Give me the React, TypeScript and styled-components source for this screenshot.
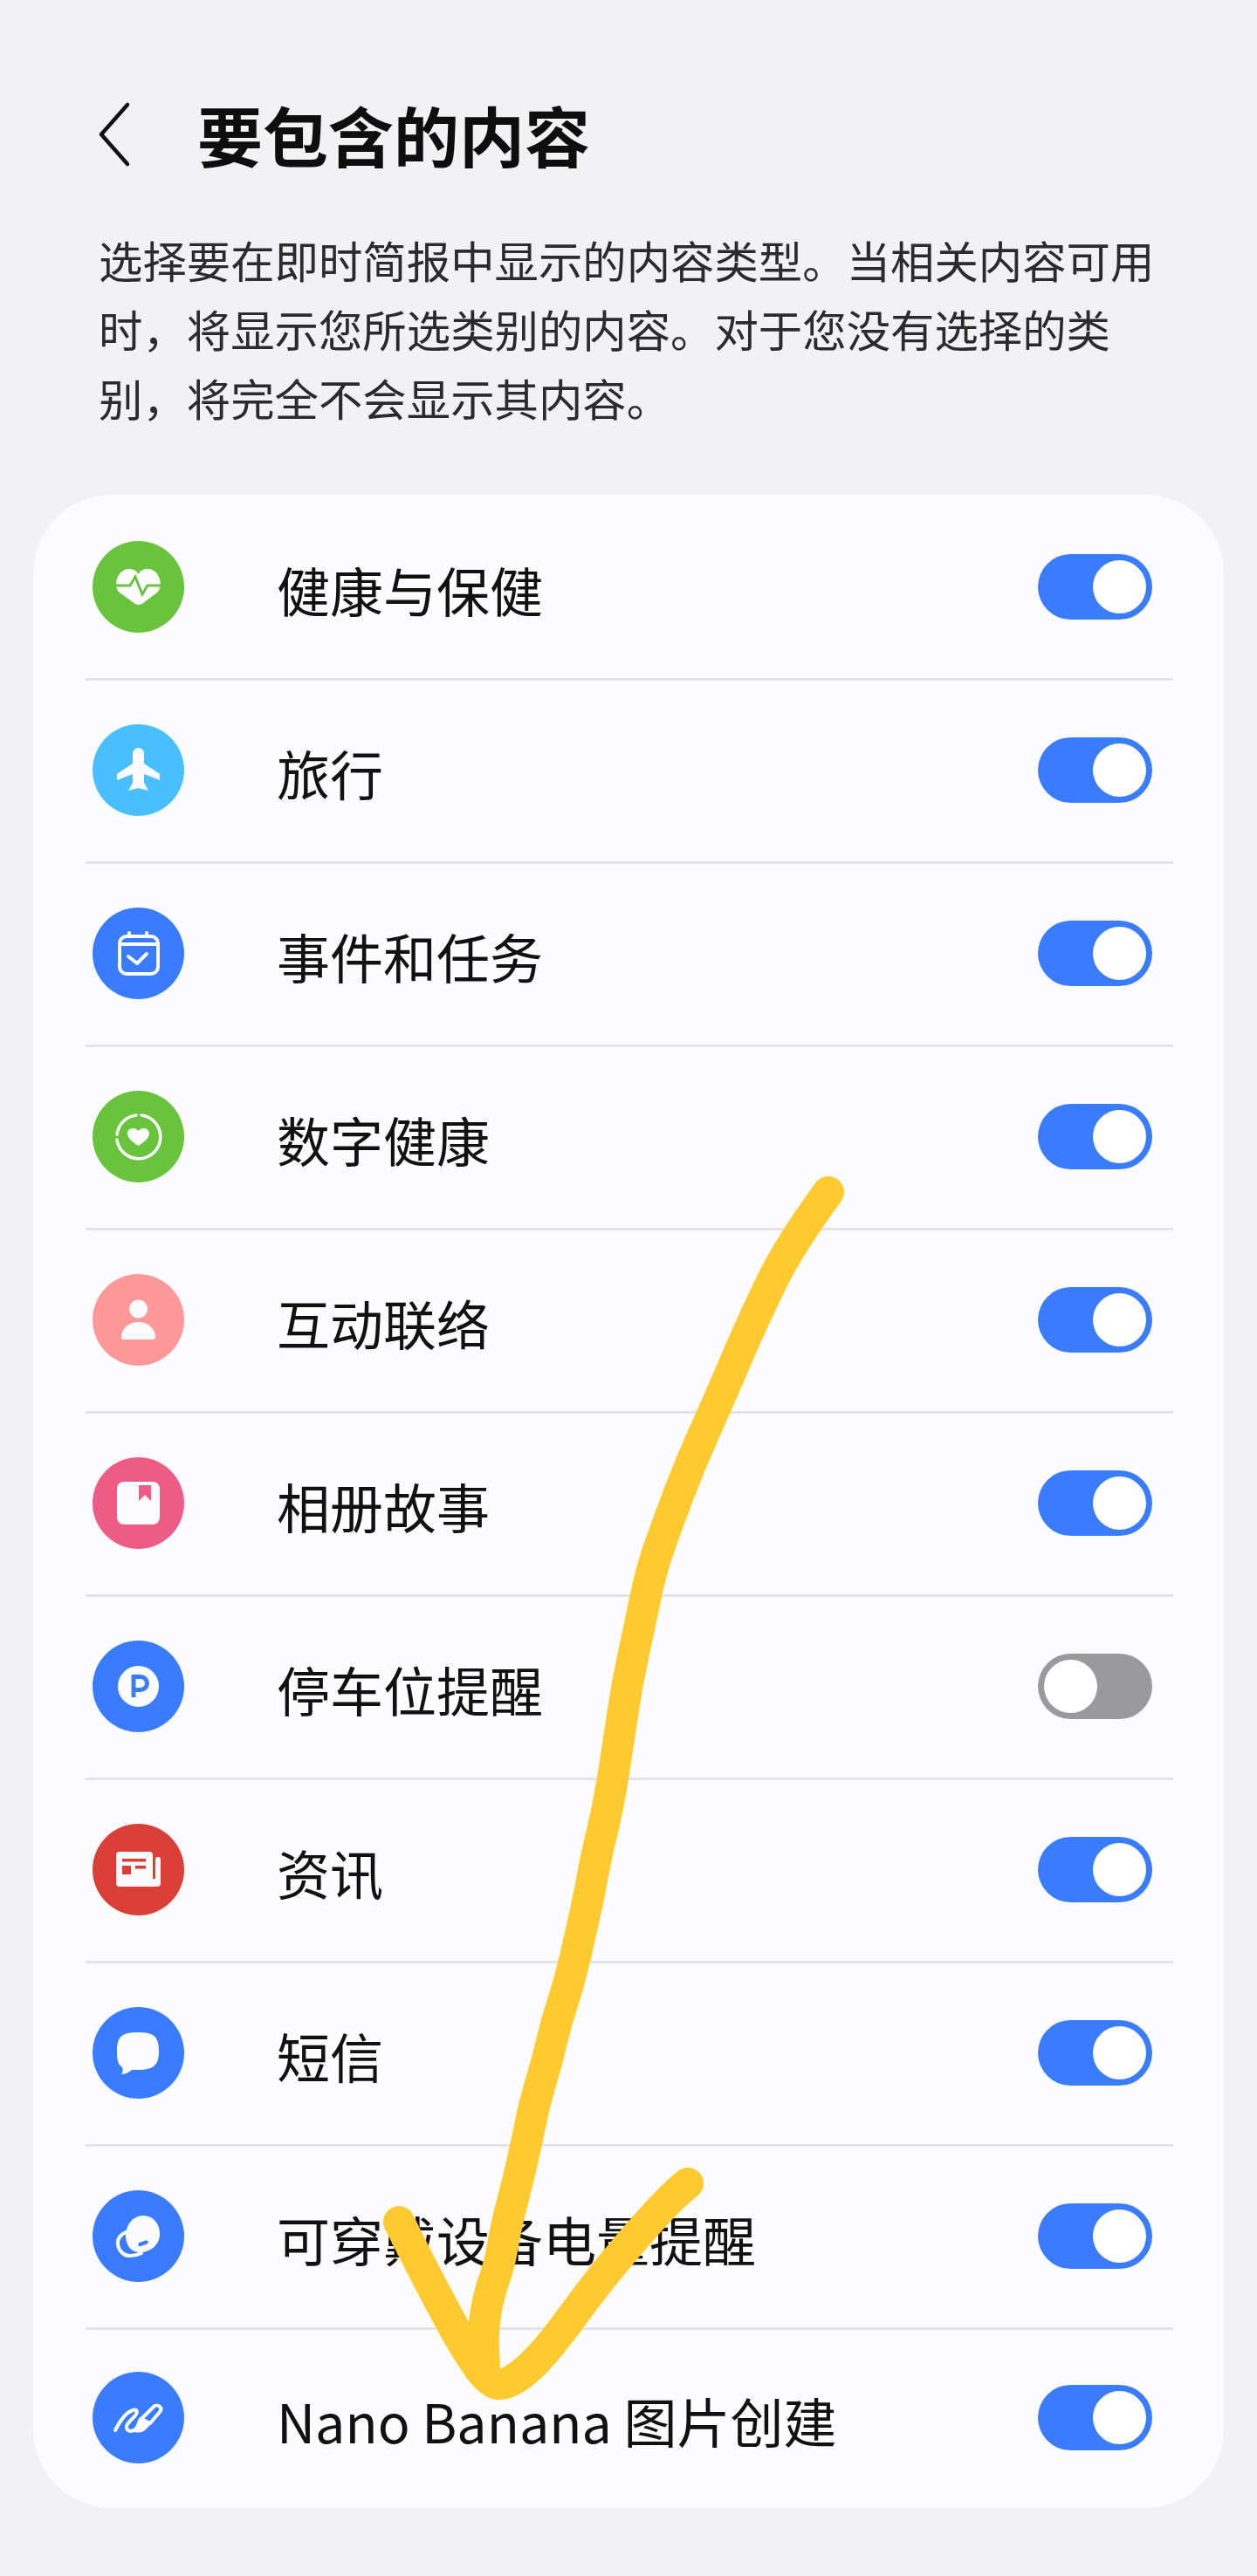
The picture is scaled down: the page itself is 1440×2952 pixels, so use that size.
import styled, { createGlobalStyle } from "styled-components";
import { ReactNode } from "react";

const GlobalStyle = createGlobalStyle`
	html, body {
		margin: 0;
		padding: 0;
		background: #f2f2f4;
	}
	body {
		font-family: "Noto Sans CJK SC", "Noto Sans", sans-serif;
	}
`;

const Page = styled.div`
	position: relative;
	width: 1440px;
	height: 2952px;
	box-sizing: border-box;
	padding: 110px 38px 0;
	background: #f2f2f4;
	overflow: hidden;
`;

const TopBar = styled.header`
	display: flex;
	align-items: center;
	height: 88px;
	padding-left: 72px;
	gap: 74px;
`;

const Title = styled.h1`
	margin: 0;
	font-size: 75px;
	line-height: 88px;
	font-weight: 700;
	color: #0e0e0e;
`;

const Description = styled.p`
	margin: 60px 0 0;
	padding: 0 70px 0 75px;
	font-size: 50.4px;
	line-height: 79px;
	color: #2b2b2d;
`;

const Card = styled.section`
	margin-top: 72px;
	padding-top: 3px;
	border-radius: 90px;
	background: #fcfcfe;
	overflow: hidden;
`;

const Row = styled.div`
	display: flex;
	align-items: center;
	height: 210px;
	margin: 0 58px 0 60px;
	padding-bottom: 3px;
	box-sizing: border-box;
	border-bottom: 3px solid #e4e4e6;
	&:last-child {
		height: 204px;
		border-bottom: none;
	}
`;

const IconCircle = styled.div<{ $color: string }>`
	flex: none;
	width: 105px;
	height: 105px;
	margin-left: 8px;
	border-radius: 50%;
	background: ${(p) => p.$color};
	svg {
		display: block;
	}
`;

const Label = styled.span`
	flex: 1;
	margin-left: 106px;
	padding-top: 6px;
	font-size: 61px;
	color: #111;
	white-space: nowrap;
`;

const Toggle = styled.div<{ $on: boolean }>`
	flex: none;
	display: flex;
	justify-content: ${(p) => (p.$on ? "flex-end" : "flex-start")};
	align-items: center;
	box-sizing: border-box;
	width: 131px;
	height: 75px;
	margin-right: 24px;
	padding: 0 7px;
	border-radius: 38px;
	background: ${(p) => (p.$on ? "#3a7cff" : "#9a999d")};
`;

const Thumb = styled.div`
	width: 61px;
	height: 61px;
	border-radius: 50%;
	background: #fff;
`;

const Scribble = styled.svg`
	position: absolute;
	top: 0;
	left: 0;
	pointer-events: none;
`;

const Glyph = ({ children }: { children: ReactNode }) => (
	<svg width="105" height="105" viewBox="0 0 105 105" fill="#fcfcfe">
		{children}
	</svg>
);

const items: { label: string; color: string; on: boolean; icon: ReactNode }[] = [
	{
		label: "健康与保健",
		color: "#69c33d",
		on: true,
		icon: (
			<>
				<path d="M52.5 73c-2 0-3.5-1-5-2L31 59c-8-7-3-27 11-27 5 0 8 2 10.5 6 2.5-4 5.500-6 10.500-6 14 0 19 20 11 27L58 71c-1.500 1-3.500 2-5.500 2z" />
				<path d="M26 51h17l6-10 8 20 6-10h18" fill="none" stroke="#69c33d" strokeWidth="3" />
			</>
		),
	},
	{
		label: "旅行",
		color: "#4abfff",
		on: true,
		icon: (
			<path d="M46 33.5a6.5 6.5 0 0 1 13 0V45l18 12v7l-18-7v10l5 9-11.500-3-11.500 3 5-9V57l-18 7v-7l18-12z" />
		),
	},
	{
		label: "事件和任务",
		color: "#3a7cff",
		on: true,
		icon: (
			<g fill="none" stroke="#fcfcfe" strokeWidth="4" strokeLinecap="round" strokeLinejoin="round">
				<rect x="31" y="33" width="44" height="43" rx="8" />
				<path d="M32 42h42" />
				<path d="M42 29v4M62 29v4" />
				<path d="M41 56l10 8 11-11" />
			</g>
		),
	},
	{
		label: "数字健康",
		color: "#69c33d",
		on: true,
		icon: (
			<>
				<g fill="none" stroke="#fcfcfe" strokeWidth="3.500" strokeLinecap="round">
					<path d="M28 50a25 25 0 0 1 22-22" />
					<path d="M56 28a25 25 0 1 1-28 28" />
				</g>
				<path d="M52.500 63C48 60 40 55 40 49c0-7 9-8 12.500-3 3.500-5 12.500-4 12.500 3 0 6-8 11-12.500 14z" />
			</>
		),
	},
	{
		label: "互动联络",
		color: "#ff9999",
		on: true,
		icon: (
			<>
				<circle cx="52.500" cy="40" r="10.500" />
				<path d="M33 72a19.500 17 0 0 1 39 0q0 3-3 3H36q-3 0-3-3z" />
			</>
		),
	},
	{
		label: "相册故事",
		color: "#ee5c86",
		on: true,
		icon: (
			<>
				<rect x="28" y="28" width="49" height="49" rx="8" />
				<path d="M53 32h14v18l-7-7-7 7z" fill="#ee5c86" />
			</>
		),
	},
	{
		label: "停车位提醒",
		color: "#3a7cff",
		on: false,
		icon: (
			<>
				<circle cx="52.500" cy="52.500" r="23.500" />
				<path d="M47 65V41.500h8a7.500 7.500 0 0 1 0 15h-8" fill="none" stroke="#3a7cff" strokeWidth="5" />
			</>
		),
	},
	{
		label: "资讯",
		color: "#d93f36",
		on: true,
		icon: (
			<>
				<path d="M31 32h34a4 4 0 0 1 4 4v27h3V41a3 3 0 0 1 6 0v27a4 4 0 0 1-4 4H31a4 4 0 0 1-4-4V36a4 4 0 0 1 4-4z" />
				<path d="M34 40h27v3.500H34zM34 48h10v10H34zM49 48h12v3.500H49z" fill="#d93f36" />
			</>
		),
	},
	{
		label: "短信",
		color: "#3a7cff",
		on: true,
		icon: (
			<path d="M52 29c18 0 24 4 24 22 0 17-8 21-24 21H45c-3 3-8 5-12 5 2-2 2-5 1-8-5-3-6-9-6-18 0-18 6-22 24-22z" />
		),
	},
	{
		label: "可穿戴设备电量提醒",
		color: "#3a7cff",
		on: true,
		icon: (
			<>
				<path d="M58 29C70 29 77 39 77 50 77 63 66 71 54 71 44 71 38 63 38 52 38 40 46 29 58 29z" />
				<path d="M39 48C32 50 28 56 29 62 30 70 37 76 44 75 48 75 52 74 56 72" fill="none" stroke="#fcfcfe" strokeWidth="4" strokeLinecap="round" />
				<path d="M54.500 62l7-2.500" stroke="#3a7cff" strokeWidth="4.500" strokeLinecap="round" />
			</>
		),
	},
	{
		label: "Nano Banana 图片创建",
		color: "#3a7cff",
		on: true,
		icon: (
			<>
				<g fill="none" stroke="#fcfcfe" strokeWidth="4" strokeLinecap="round" strokeLinejoin="round">
					<path d="M26 67C31 57 37 47 46 44 51 42 52 46 49 50 45 55 38 60 39 64 40 69 46 69 50 65 53 61 54 57 57 55" />
					<path d="M56 54L70 40C72 38 75 38 77 40 79 42 79 44 77 46L66 59z" />
				</g>
				<path d="M54 52L67 60 60 67C56 70 52 70 48 69 49 63 51 57 54 52z" />
			</>
		),
	},
];

// polyline traced from the hand drawn arrow, smoothed through the midpoints
const smooth = (pts: number[][]) => {
	let d = `M${pts[0][0]} ${pts[0][1]}`;
	for (let i = 1; i < pts.length - 1; i++) {
		const mx = (pts[i][0] + pts[i + 1][0]) / 2;
		const my = (pts[i][1] + pts[i + 1][1]) / 2;
		d += `Q${pts[i][0]} ${pts[i][1]} ${mx} ${my}`;
	}
	const last = pts[pts.length - 1];
	return `${d}L${last[0]} ${last[1]}`;
};

const shaft = [
	[949, 1366], [905, 1426], [863, 1512], [821, 1610], [790, 1679], [764, 1748], [746, 1799],
	[733, 1862], [718, 1931], [708, 2000], [697, 2069], [683, 2127], [675, 2171], [664, 2221],
	[652, 2272], [637, 2318], [626, 2365], [612, 2411], [603, 2457], [591, 2508], [580, 2550],
	[572, 2596], [561, 2626], [553, 2668], [555, 2715],
];

const barb = [
	[457, 2546], [482, 2596], [511, 2651], [534, 2693], [561, 2731], [580, 2733], [607, 2714],
	[637, 2680], [683, 2617], [729, 2562], [767, 2520], [788, 2502],
];

const App = () => {
	return (
		<Page>
			<GlobalStyle />
			<TopBar>
				<svg width="42" height="76" viewBox="0 0 42 76" fill="none" stroke="#111" strokeWidth="4.500" strokeLinecap="round" strokeLinejoin="round">
					<path d="M36 4L6 38l30 34" />
				</svg>
				<Title>要包含的内容</Title>
			</TopBar>
			<Description>
				选择要在即时简报中显示的内容类型。当相关内容可用时，将显示您所选类别的内容。对于您没有选择的类别，将完全不会显示其内容。
			</Description>
			<Card>
				{items.map((item) => (
					<Row key={item.label}>
						<IconCircle $color={item.color}>
							<Glyph>{item.icon}</Glyph>
						</IconCircle>
						<Label>{item.label}</Label>
						<Toggle $on={item.on}>
							<Thumb />
						</Toggle>
					</Row>
				))}
			</Card>
			<Scribble width="1440" height="2952" viewBox="0 0 1440 2952" fill="none" stroke="#ffca30" strokeWidth="36" strokeLinecap="round" strokeLinejoin="round">
				<path d={smooth(shaft)} />
				<path d={smooth(barb)} />
			</Scribble>
		</Page>
	);
};

export default App;
